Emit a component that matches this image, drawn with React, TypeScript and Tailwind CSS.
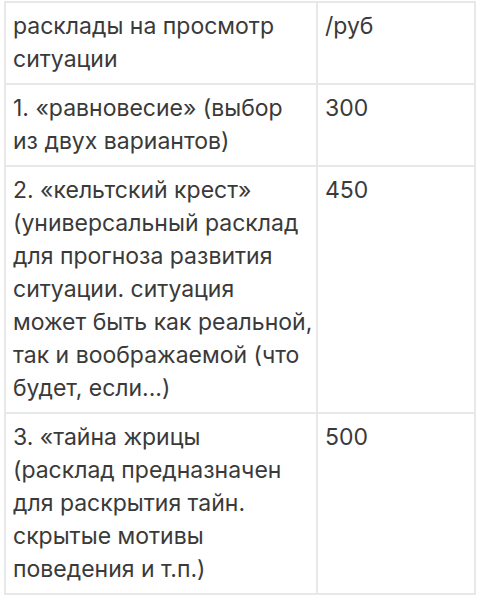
const rows: { name: string[]; price: string }[] = [
  { name: ['расклады на просмотр', 'ситуации'], price: '/руб' },
  { name: ['1. «равновесие» (выбор', 'из двух вариантов)'], price: '300' },
  {
    name: [
      '2. «кельтский крест»',
      '(универсальный расклад',
      'для прогноза развития',
      'ситуации. ситуация',
      'может быть как реальной,',
      'так и воображаемой (что',
      'будет, если...)',
    ],
    price: '450',
  },
  {
    name: [
      '3. «тайна жрицы',
      '(расклад предназначен',
      'для раскрытия тайн.',
      'скрытые мотивы',
      'поведения и т.п.)',
    ],
    price: '500',
  },
]

export default function App() {
  return (
    <div className="min-h-screen bg-white pl-[4px] pt-[1px] font-['Inter',sans-serif] text-[#3a3a3a]">
      <table className="w-[472px] table-fixed border-collapse">
        <tbody>
          {rows.map((row, i) => (
            <tr key={i}>
              <td className="w-[312px] border-2 border-[#e8e8e8] px-[7px] py-[7px] align-top text-[23px] leading-[33px]">
                {row.name.map((line, j) => (
                  <div key={j} className="whitespace-nowrap">
                    {line}
                  </div>
                ))}
              </td>
              <td className="border-2 border-[#e8e8e8] px-[7px] py-[7px] align-top text-[23px] leading-[33px]">
                {row.price}
              </td>
            </tr>
          ))}
        </tbody>
      </table>
    </div>
  )
}
